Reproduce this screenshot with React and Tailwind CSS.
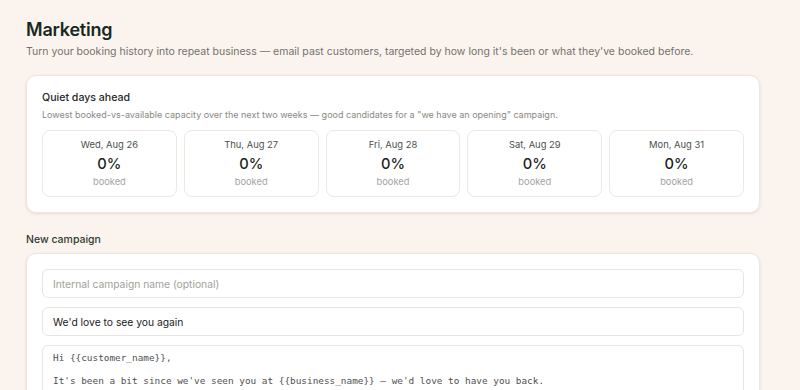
import React from 'react';

const days = [
    { label: 'Wed, Aug 26', pct: 0 },
    { label: 'Thu, Aug 27', pct: 0 },
    { label: 'Fri, Aug 28', pct: 0 },
    { label: 'Sat, Aug 29', pct: 0 },
    { label: 'Mon, Aug 31', pct: 0 },
];

const body = `Hi {{customer_name}},

It's been a bit since we've seen you at {{business_name}} — we'd love to have you back.

Book your next visit any time.`;

const DayCard = ({ label, pct }) => (
    <div className="flex flex-col items-center rounded-lg border border-[#ece8e3] bg-white pt-[8px] pb-[8px]">
        <span className="text-[9.4px] leading-[12px] text-[#4a504c]">{label}</span>
        <span className="mt-[4px] text-[14.7px] leading-[18px] font-medium text-[#1c1f1d]">{pct}%</span>
        <span className="mt-[3px] text-[9.3px] leading-[12px] text-[#a3a3a3]">booked</span>
    </div>
);

export default function App() {
    return (
        <div className="min-h-screen bg-[#fbf4ee] font-['Inter',sans-serif] px-[26px] pt-[19px]">
            <div className="w-[734px]">
                <h1 className="text-[18px] leading-[22px] font-semibold text-[#17291f] tracking-[-0.2px]">Marketing</h1>
                <p className="mt-[2.5px] text-[10.5px] leading-[15px] text-[#74716d]">
                    Turn your booking history into repeat business — email past customers, targeted by how long it's been or what they've booked before.
                </p>

                <div className="mt-[16.5px] rounded-[10px] border border-[#ebe6e0] bg-white px-[15px] pt-[15px] pb-[15px] shadow-[0_1px_3px_rgba(0,0,0,0.1)]">
                    <h2 className="text-[10.6px] leading-[14px] font-medium text-[#23282a]">Quiet days ahead</h2>
                    <p className="mt-[4px] text-[9px] leading-[12px] text-[#8a8784]">
                        Lowest booked-vs-available capacity over the next two weeks — good candidates for a "we have an opening" campaign.
                    </p>
                    <div className="mt-[9px] grid grid-cols-5 gap-[7px]">
                        {days.map((d) => (
                            <DayCard key={d.label} {...d} />
                        ))}
                    </div>
                </div>

                <h2 className="mt-[20px] text-[10.5px] leading-[14px] font-medium text-[#2e3b33]">New campaign</h2>

                <div className="mt-[6px] rounded-[10px] border border-[#ebe6e0] bg-white px-[15px] pt-[15px] pb-[15px] shadow-[0_1px_3px_rgba(0,0,0,0.1)]">
                    <div className="flex flex-col gap-[9px]">
                        <input
                            className="h-[29px] w-full rounded-md border border-[#e8e5e1] px-[10px] text-[10.3px] text-[#222] placeholder:text-[#a29f9b] outline-none"
                            placeholder="Internal campaign name (optional)"
                        />
                        <input
                            className="h-[29px] w-full rounded-md border border-[#e8e5e1] px-[10px] text-[10.3px] text-[#222] outline-none"
                            defaultValue="We'd love to see you again"
                        />
                        <textarea
                            className="h-[140px] w-full resize-none rounded-md border border-[#e8e5e1] px-[10px] pt-[6px] font-['DejaVu_Sans_Mono',monospace] text-[9.4px] leading-[11.5px] text-[#505050] outline-none"
                            defaultValue={body}
                        />
                    </div>
                </div>
            </div>
        </div>
    );
}
